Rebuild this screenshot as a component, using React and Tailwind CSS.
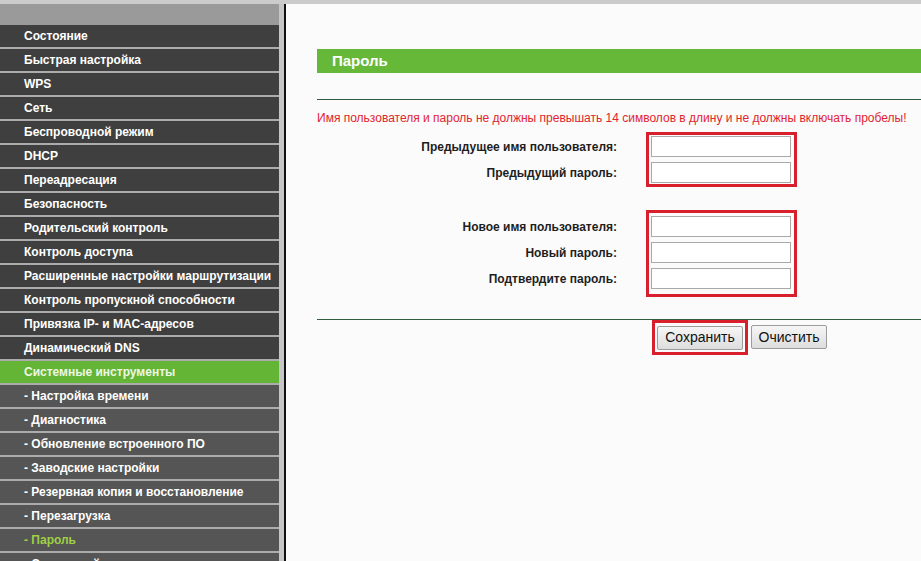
import React from 'react';

const MENU = [
  { label: 'Состояние' },
  { label: 'Быстрая настройка' },
  { label: 'WPS' },
  { label: 'Сеть' },
  { label: 'Беспроводной режим' },
  { label: 'DHCP' },
  { label: 'Переадресация' },
  { label: 'Безопасность' },
  { label: 'Родительский контроль' },
  { label: 'Контроль доступа' },
  { label: 'Расширенные настройки маршрутизации' },
  { label: 'Контроль пропускной способности' },
  { label: 'Привязка IP- и MAC-адресов' },
  { label: 'Динамический DNS' },
  { label: 'Системные инструменты', active: true },
  { label: '- Настройка времени', sub: true },
  { label: '- Диагностика', sub: true },
  { label: '- Обновление встроенного ПО', sub: true },
  { label: '- Заводские настройки', sub: true },
  { label: '- Резервная копия и восстановление', sub: true },
  { label: '- Перезагрузка', sub: true },
  { label: '- Пароль', sub: true, current: true },
  { label: '- Системный журнал', sub: true },
];

function MenuItem({ item }) {
  let bg = 'bg-[#3f3f3f] text-white';
  if (item.active) bg = 'bg-[#64b436] text-[#eef7e2]';
  else if (item.sub) bg = item.current ? 'bg-[#555555] text-[#9fd045]' : 'bg-[#555555] text-white';

  return (
    <div className="shrink-0 border-b-2 border-[#acacac]">
      <div className={`h-[22px] flex items-center pl-6 text-[12px] font-bold whitespace-nowrap ${bg}`}>
        {item.label}
      </div>
    </div>
  );
}

function Field() {
  return <input type="text" className="block w-[140px] h-[21px] bg-white border border-[#a9a9a9] outline-none" />;
}

function Group({ labels, padTop = 1, boxClass = 'pt-[1px] pb-[1px]' }) {
  return (
    <div className="flex">
      <div className="w-[300px] flex flex-col gap-[5px]" style={{ paddingTop: padTop + 3 }}>
        {labels.map((l) => (
          <div key={l} className="h-[21px] flex items-center justify-end text-[12px] font-bold text-[#1e1e1e]">
            {l}
          </div>
        ))}
      </div>
      <div className={`ml-[29px] self-start border-[3px] border-[#d8202c] pl-[2px] pr-[3px] flex flex-col gap-[5px] ${boxClass}`}>
        {labels.map((l) => (
          <Field key={l} />
        ))}
      </div>
    </div>
  );
}

export default function App() {
  return (
    <div className="h-[561px] w-[921px] overflow-hidden bg-[#cbcbcb] pt-[4px] font-['Liberation_Sans',Arial,sans-serif]">
      <div className="flex h-full">
        {/* sidebar */}
        <div className="w-[279px] shrink-0 flex flex-col overflow-hidden">
          <div className="h-[21px] shrink-0 bg-[#9a9a9a]" />
          {MENU.map((item) => (
            <MenuItem key={item.label} item={item} />
          ))}
        </div>
        <div className="w-[5px] shrink-0 bg-[#c6c6c6]" />
        <div className="w-[2px] shrink-0 bg-[#111111]" />

        {/* content */}
        <div className="flex-1 min-w-0 bg-[#fbfbfb] pl-[31px] overflow-hidden">
          <div className="mt-[45px] h-[24px] bg-[#66b838] flex items-center pl-[15px] text-[15px] font-bold text-white">
            Пароль
          </div>
          <div className="mt-[26px] h-px bg-[#2f5c3c]" />
          <p className="mt-[11px] text-[12px] leading-[14px] text-[#e1242f] whitespace-nowrap">
            Имя пользователя и пароль не должны превышать 14 символов в длину и не должны включать пробелы!
          </p>

          <div className="mt-[7px]">
            <Group labels={['Предыдущее имя пользователя:', 'Предыдущий пароль:']} />
          </div>
          <div className="mt-[23px]">
            <Group
              labels={['Новое имя пользователя:', 'Новый пароль:', 'Подтвердите пароль:']}
              padTop={3}
              boxClass="pt-[3px] pb-[5px]"
            />
          </div>

          <div className="mt-[22px] h-px bg-[#2f5c3c]" />

          <div className="ml-[335px] flex items-center gap-[3px]">
            <div className="border-[3px] border-[#d8202c] px-[2px] py-[2px]">
              <button className="h-[24px] w-[86px] rounded-[2px] border border-[#9c9c9c] bg-gradient-to-b from-[#f6f6f6] to-[#dddddd] text-[14px] text-[#111]">
                Сохранить
              </button>
            </div>
            <button className="h-[24px] w-[76px] rounded-[2px] border border-[#9c9c9c] bg-gradient-to-b from-[#f6f6f6] to-[#dddddd] text-[14px] text-[#111]">
              Очистить
            </button>
          </div>
        </div>
      </div>
    </div>
  );
}
